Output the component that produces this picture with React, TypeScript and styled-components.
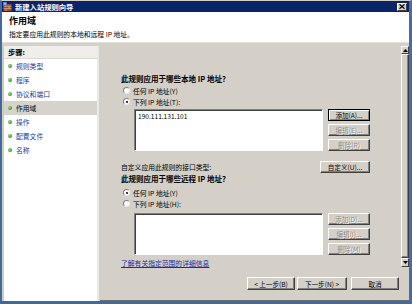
import React from "react";
import styled, { createGlobalStyle } from "styled-components";

const Global = createGlobalStyle`
  html, body { margin: 0; padding: 0; background: #3a6ea5; }
  body { font-family: "Noto Sans CJK SC", "Noto Sans", sans-serif; color: #000; }
  * { box-sizing: border-box; }
`;

const Window = styled.div`
  width: 412px;
  height: 304px;
  display: flex;
  flex-direction: column;
  background: #d4d0c8;
  border-top: 1px solid #d4d0c8;
  border-left: 2px solid #3f6a9e;
  border-right: 3px solid #4a6c98;
  border-bottom: 3px solid #3f6a9e;
`;

const TitleBar = styled.div`
  height: 11px;
  flex: none;
  background: #0a246a;
  display: flex;
  align-items: center;
  padding: 0 2px 0 1px;
`;

const TitleText = styled.span`
  color: #fff;
  font-weight: bold;
  font-size: 7.3px;
  line-height: 10px;
  margin-left: 3px;
  flex: 1;
  white-space: nowrap;
`;

const CloseBtn = styled.div`
  width: 10px;
  height: 8px;
  background: #d4d0c8;
  border: 1px solid;
  border-color: #fff #404040 #404040 #fff;
  display: flex;
  align-items: center;
  justify-content: center;
`;

const Header = styled.div`
  height: 31px;
  flex: none;
  background: #fff;
  padding: 3px 0 0 7px;
  border-bottom: 1px solid #e2e0da;
`;

const HeaderTitle = styled.div`
  font-size: 9px;
  font-weight: bold;
  line-height: 12px;
`;

const HeaderSub = styled.div`
  font-size: 6.8px;
  line-height: 10px;
  margin-top: 2px;
  white-space: nowrap;
`;

const Body = styled.div`
  flex: 1;
  display: flex;
  padding-top: 3px;
  min-height: 0;
`;

const Sidebar = styled.div`
  width: 96px;
  margin-left: 1px;
  background: #fff;
  border-left: 1px solid #c8c6c0;
  border-right: 2px solid #ebe9e4;
  display: flex;
  flex-direction: column;
`;

const SideHeader = styled.div`
  height: 13px;
  background: #efeeea;
  border-bottom: 1px solid #dcdad4;
  font-size: 7.3px;
  font-weight: bold;
  line-height: 12px;
  padding-left: 4px;
`;

const NavItem = styled.div<{ $active?: boolean }>`
  height: 14px;
  display: flex;
  align-items: center;
  padding-left: 4px;
  font-size: 6.8px;
  color: ${(p) => (p.$active ? "#000" : "#23399a")};
  background: ${(p) => (p.$active ? "#d6d3cd" : "transparent")};
`;

const Bullet = styled.span`
  width: 4px;
  height: 4px;
  border-radius: 50%;
  background: radial-gradient(circle at 35% 35%, #9ee07a, #2f9a2f 70%);
  margin-right: 4px;
  flex: none;
`;

const Main = styled.div`
  flex: 1;
  display: flex;
  flex-direction: column;
  margin-left: 1px;
`;

const ContentArea = styled.div`
  height: 221px;
  display: flex;
  flex: none;
`;

const Content = styled.div`
  flex: 1;
  padding: 28px 0 0 21px;
  display: flex;
  flex-direction: column;
`;

const Column = styled.div`
  width: 249px;
  display: flex;
  flex-direction: column;
`;

const Question = styled.div<{ $mt?: number }>`
  font-size: 7.5px;
  font-weight: bold;
  line-height: 10px;
  margin-top: ${(p) => p.$mt ?? 0}px;
  white-space: nowrap;
`;

const RadioRow = styled.div<{ $mt?: number }>`
  height: 11px;
  display: flex;
  align-items: center;
  padding-left: 2px;
  font-size: 6.8px;
  margin-top: ${(p) => p.$mt ?? 0}px;
  white-space: nowrap;
`;

const RadioCircle = styled.span<{ $checked?: boolean }>`
  width: 7px;
  height: 7px;
  border-radius: 50%;
  background: #fff;
  border: 1px solid;
  border-color: #808080 #e8e8e8 #e8e8e8 #808080;
  display: inline-flex;
  align-items: center;
  justify-content: center;
  margin-right: 3px;
  flex: none;
  &::after {
    content: "";
    width: 2px;
    height: 2px;
    border-radius: 50%;
    background: ${(p) => (p.$checked ? "#000" : "transparent")};
  }
`;

const ListRow = styled.div<{ $mt?: number }>`
  display: flex;
  margin-top: ${(p) => p.$mt ?? 0}px;
  padding-left: 13px;
`;

const ListBox = styled.div`
  width: 189px;
  height: 42px;
  background: #fff;
  border: 1px solid;
  border-color: #808080 #fff #fff #808080;
  box-shadow: inset 1px 1px #404040;
  padding: 2px 3px;
  font-size: 6.6px;
  line-height: 8px;
`;

const ButtonCol = styled.div`
  display: flex;
  flex-direction: column;
  gap: 3px;
  margin-left: 5px;
`;

const Btn = styled.div<{ $w: number; $h?: number; $disabled?: boolean; $default?: boolean }>`
  width: ${(p) => p.$w}px;
  height: ${(p) => p.$h ?? 12}px;
  background: #d4d0c8;
  border: 1px solid;
  border-color: ${(p) => (p.$default ? "#000" : "#fff #404040 #404040 #fff")};
  box-shadow: ${(p) =>
    p.$default ? "inset 1px 1px #fff, inset -1px -1px #808080" : "inset -1px -1px #808080"};
  display: flex;
  align-items: center;
  justify-content: center;
  font-size: 6.6px;
  line-height: 8px;
  white-space: nowrap;
  color: ${(p) => (p.$disabled ? "#8a8780" : "#000")};
  text-shadow: ${(p) => (p.$disabled ? "1px 1px #fff" : "none")};
`;

const CustomRow = styled.div`
  display: flex;
  align-items: center;
  justify-content: space-between;
  margin-top: 10px;
  height: 12px;
  font-size: 6.8px;
  white-space: nowrap;
`;

const Link = styled.div`
  margin-top: 3px;
  font-size: 6.8px;
  line-height: 10px;
  color: #1b2fa3;
  text-decoration: underline;
  white-space: nowrap;
`;

const ScrollBar = styled.div`
  width: 8px;
  display: flex;
  flex-direction: column;
  background: #e6e3de;
`;

const ScrollBtn = styled.div<{ $h: number }>`
  height: ${(p) => p.$h}px;
  background: #d4d0c8;
  border: 1px solid;
  border-color: #fff #404040 #404040 #fff;
  display: flex;
  align-items: center;
  justify-content: center;
  flex: none;
`;

const Thumb = styled.div`
  flex: 1;
  background: #d4d0c8;
  border: 1px solid;
  border-color: #fff #404040 #404040 #fff;
  box-shadow: inset -1px -1px #808080;
`;

const Footer = styled.div`
  flex: 1;
  display: flex;
  justify-content: flex-end;
  align-items: flex-start;
  padding: 10px 10px 0 0;
  border-bottom: 1px solid #6f6d68;
`;

const FooterGap = styled.span<{ $w: number }>`
  width: ${(p) => p.$w}px;
  flex: none;
`;

const FirewallIcon = () => (
  <svg width="9" height="9" viewBox="0 0 9 9">
    <rect x="0.5" y="2" width="8" height="7" fill="#a8452c" />
    <path d="M0.5 4.3H8.5M0.5 6.6H8.5M3 2V4.3M6 4.3V6.6M3 6.6V9" stroke="#e8c8a8" strokeWidth="0.6" />
    <rect x="0" y="0" width="4" height="3.5" fill="#3a72d0" />
    <rect x="0.8" y="0.7" width="2.4" height="2" fill="#9cc4ff" />
  </svg>
);

const CloseIcon = () => (
  <svg width="6" height="5" viewBox="0 0 6 5">
    <path d="M0.5 0.3L5.5 4.7M5.5 0.3L0.5 4.7" stroke="#000" strokeWidth="1.2" />
  </svg>
);

const Arrow = ({ up }: { up?: boolean }) => (
  <svg width="5" height="3" viewBox="0 0 5 3">
    <path d={up ? "M2.5 0L5 3H0Z" : "M0 0H5L2.5 3Z"} fill="#000" />
  </svg>
);

const steps = ["规则类型", "程序", "协议和端口", "作用域", "操作", "配置文件", "名称"];

export default function App() {
  return (
    <>
      <Global />
      <Window>
        <TitleBar>
          <FirewallIcon />
          <TitleText>新建入站规则向导</TitleText>
          <CloseBtn>
            <CloseIcon />
          </CloseBtn>
        </TitleBar>
        <Header>
          <HeaderTitle>作用域</HeaderTitle>
          <HeaderSub>指定要应用此规则的本地和远程 IP 地址。</HeaderSub>
        </Header>
        <Body>
          <Sidebar>
            <SideHeader>步骤:</SideHeader>
            {steps.map((s) => (
              <NavItem key={s} $active={s === "作用域"}>
                <Bullet />
                {s}
              </NavItem>
            ))}
          </Sidebar>
          <Main>
            <ContentArea>
              <Content>
                <Column>
                  <Question>此规则应用于哪些本地 IP 地址?</Question>
                  <RadioRow $mt={1}>
                    <RadioCircle />
                    任何 IP 地址(Y)
                  </RadioRow>
                  <RadioRow>
                    <RadioCircle $checked />
                    下列 IP 地址(T):
                  </RadioRow>
                  <ListRow $mt={2}>
                    <ListBox>190.111.131.101</ListBox>
                    <ButtonCol>
                      <Btn $w={42} $default>添加(A)...</Btn>
                      <Btn $w={42} $disabled>编辑(E)...</Btn>
                      <Btn $w={42} $disabled>删除(R)</Btn>
                    </ButtonCol>
                  </ListRow>
                  <CustomRow>
                    自定义应用此规则的接口类型:
                    <Btn $w={50}>自定义(U)...</Btn>
                  </CustomRow>
                  <Question $mt={1}>此规则应用于哪些远程 IP 地址?</Question>
                  <RadioRow $mt={3}>
                    <RadioCircle $checked />
                    任何 IP 地址(Y)
                  </RadioRow>
                  <RadioRow>
                    <RadioCircle />
                    下列 IP 地址(H):
                  </RadioRow>
                  <ListRow $mt={4}>
                    <ListBox />
                    <ButtonCol>
                      <Btn $w={42} $disabled>添加(D)...</Btn>
                      <Btn $w={42} $disabled>编辑(I)...</Btn>
                      <Btn $w={42} $disabled>删除(M)</Btn>
                    </ButtonCol>
                  </ListRow>
                  <Link>了解有关指定范围的详细信息</Link>
                </Column>
              </Content>
              <ScrollBar>
                <ScrollBtn $h={8}>
                  <Arrow up />
                </ScrollBtn>
                <Thumb />
                <ScrollBtn $h={9}>
                  <Arrow />
                </ScrollBtn>
              </ScrollBar>
            </ContentArea>
            <Footer>
              <Btn $w={48} $h={13}>&lt; 上一步(B)</Btn>
              <FooterGap $w={2} />
              <Btn $w={50} $h={13}>下一步(N) &gt;</Btn>
              <FooterGap $w={4} />
              <Btn $w={48} $h={13}>取消</Btn>
            </Footer>
          </Main>
        </Body>
      </Window>
    </>
  );
}
